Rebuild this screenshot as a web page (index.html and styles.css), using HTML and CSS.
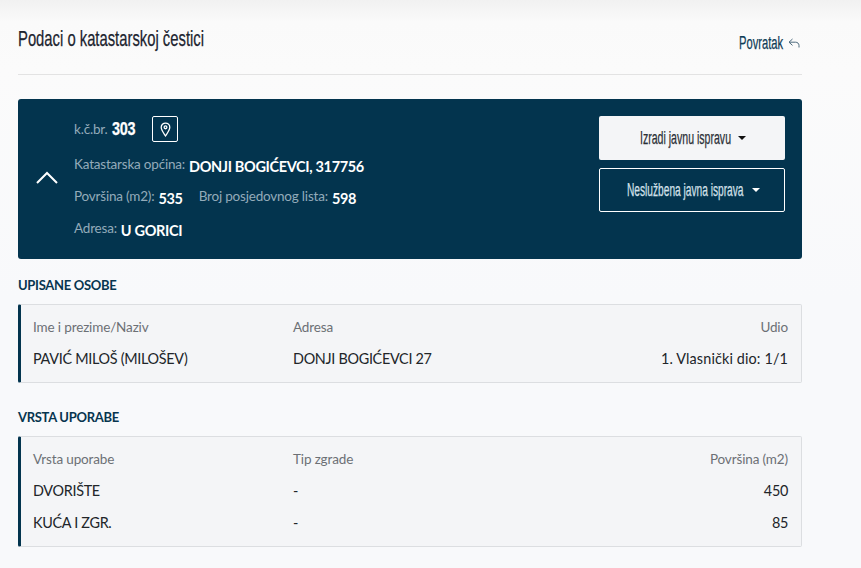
FILE: index.html
```html
<!DOCTYPE html>
<html lang="hr">
<head>
<meta charset="utf-8">
<title>Podaci o katastarskoj čestici</title>
<link rel="stylesheet" href="styles.css">
</head>
<body>
<main class="page">
  <header class="head">
    <h1 class="title"><span class="nar nar-title">Podaci o katastarskoj čestici</span></h1>
    <a class="back" href="#"><span class="nar nar-back">Povratak</span>
      <svg class="back-icon" width="12" height="11" viewBox="0 0 12 11" fill="none" stroke="#4d6b7d" stroke-width="1"><path d="M4.500 1 1 4.200l3.500 3.200M1 4.200h6.500c2 0 3.500 1.300 3.500 3.300v2"/></svg>
    </a>
  </header>
  <section class="banner">
    <svg class="chevron" width="22" height="13" viewBox="0 0 22 13" fill="none" stroke="#fff" stroke-width="2"><path d="M1 12 11 2l10 10"/></svg>
    <div class="info">
      <div class="line first"><span class="lbl">k.č.br.</span><strong class="num"><span class="nar nar-num">303</span></strong>
        <span class="pin"><svg width="11" height="15" viewBox="0 0 10 14" fill="none" stroke="#fff" stroke-width="1.200"><path d="M5 13C3 10 1 7.500 1 5a4 4 0 0 1 8 0c0 2.500-2 5-4 8Z"/><circle cx="5" cy="5" r="1.300"/></svg></span>
      </div>
      <div class="line"><span class="lbl">Katastarska općina:</span><strong>DONJI BOGIĆEVCI, 317756</strong></div>
      <div class="line"><span class="lbl">Površina (m2):</span><strong>535</strong><span class="lbl gap">Broj posjedovnog lista:</span><strong>598</strong></div>
      <div class="line"><span class="lbl">Adresa:</span><strong>U GORICI</strong></div>
    </div>
    <div class="actions">
      <button class="btn light"><span class="nar nar-b1">Izradi javnu ispravu</span><i class="caret"></i></button>
      <button class="btn outline"><span class="nar nar-b2">Neslužbena javna isprava</span><i class="caret"></i></button>
    </div>
  </section>
  <h2 class="sect">UPISANE OSOBE</h2>
  <div class="card">
    <div class="row hdr"><span>Ime i prezime/Naziv</span><span>Adresa</span><span class="r">Udio</span></div>
    <div class="row"><span>PAVIĆ MILOŠ (MILOŠEV)</span><span>DONJI BOGIĆEVCI 27</span><span class="r share">1. Vlasnički dio: 1/1</span></div>
  </div>
  <h2 class="sect">VRSTA UPORABE</h2>
  <div class="card">
    <div class="row hdr"><span>Vrsta uporabe</span><span>Tip zgrade</span><span class="r">Površina (m2)</span></div>
    <div class="row"><span>DVORIŠTE</span><span>-</span><span class="r">450</span></div>
    <div class="row"><span>KUĆA I ZGR.</span><span>-</span><span class="r">85</span></div>
  </div>
</main>
</body>
</html>
```
FILE: styles.css
```css
* { box-sizing: border-box; }
html, body { margin: 0; height: 100%; }
body {
  background: linear-gradient(#f1f1f1 0, #fafafa 22px, #fbfbfb 70px, #f8f9fb 300px);
  font-family: "Lato", sans-serif;
  color: #212529;
  overflow: hidden;
}
.page { width: 784px; margin-left: 18px; }
.nar {
  display: inline-block;
  white-space: nowrap;
  transform-origin: left center;
  font-family: "Liberation Sans", sans-serif;
  -webkit-text-stroke: .25px currentColor;
}
.nar-title { width: 186px; font-size: 22px; transform: scaleX(.673); }
.nar-back { width: 44px; font-size: 18px; transform: scaleX(.62); }
.nar-num { width: 24px; font-size: 19px; font-weight: 700; transform: scaleX(.76); }
.nar-b1 { width: 91px; font-size: 18px; transform: scaleX(.587); }
.nar-b2 { width: 118px; font-size: 18px; transform: scaleX(.565); }
.head {
  height: 75px;
  border-bottom: 1px solid #e3e3e3;
  display: flex;
  justify-content: space-between;
  padding-top: 26px;
}
.title {
  margin: 0;
  font-weight: 400;
  font-size: 22px;
  line-height: 24px;
  color: #1d2530;
}
.back {
  margin: 6px 2px 0 0;
  color: #0f3d57;
  text-decoration: none;
  display: flex;
  align-items: center;
  gap: 5px;
  height: 22px;
}
.banner {
  margin-top: 24px;
  height: 160px;
  background: #03344e;
  border-radius: 3px;
  display: flex;
  align-items: flex-start;
  padding: 17px 17px 0 18px;
  color: #fff;
}
.chevron { margin-top: 55px; margin-right: 16px; flex: none; }
.info { flex: 1; margin-top: -1px; }
.line {
  height: 32px;
  display: flex;
  align-items: center;
  white-space: pre;
  font-size: 14.500px;
  letter-spacing: -.35px;
}
.first { height: 28px; margin-bottom: 7px; }
.lbl { color: #93abba; font-size: 13.500px; letter-spacing: -.2px; margin-bottom: 4px; }
.first .lbl { margin-bottom: 0; }
.gap { margin-left: 16px; }
.line strong { font-weight: 700; margin-left: 4px; }
.line .num { margin-left: 5px; }
.pin {
  width: 26px; height: 26px;
  margin-left: 16px;
  border: 1px solid #fff;
  border-radius: 2px;
  display: flex; align-items: center; justify-content: center;
}
.actions { width: 186px; display: flex; flex-direction: column; gap: 8px; }
.btn {
  height: 44px;
  border-radius: 2px;
  display: flex; align-items: center; justify-content: center;
  padding: 0 0 0 2px;
}
.light { background: #f4f5f7; border: 0; color: #2a2f36; }
.outline { background: transparent; border: 1px solid #fff; color: #d3e0ea; }
.caret {
  margin-left: 7px;
  border-top: 4px solid currentColor;
  border-left: 4px solid transparent;
  border-right: 4px solid transparent;
}
.light .caret { color: #111; }
.outline .caret { color: #fff; }
.sect {
  margin: 0;
  height: 45px;
  padding-top: 18px;
  font-weight: 700;
  font-size: 13px;
  letter-spacing: -.3px;
  line-height: 17px;
  color: #07354f;
}
.card {
  background: #f4f5f7;
  border: 1px solid #dcdee1;
  border-left: 3px solid #03344e;
  border-radius: 2px;
  padding: 5px 13px 8px 12px;
  margin-bottom: 8px;
}
.row {
  display: grid;
  grid-template-columns: 260px 1fr auto;
  height: 32px;
  align-items: center;
  font-size: 14.400px;
  letter-spacing: -.3px;
  color: #212529;
}
.hdr { font-size: 13.500px; letter-spacing: -.14px; color: #6c7075; padding-top: 2px; }
.r { text-align: right; }
.share { letter-spacing: .13px; }
```
